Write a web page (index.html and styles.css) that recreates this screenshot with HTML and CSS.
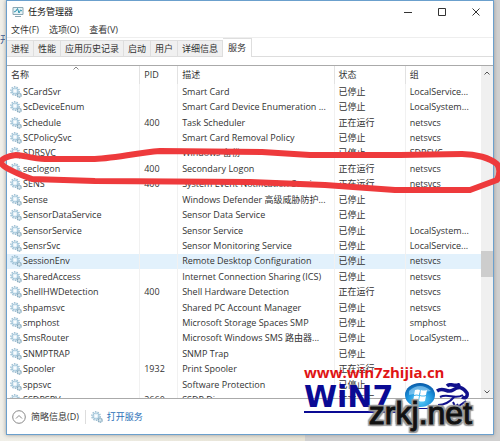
FILE: index.html
```html
<!DOCTYPE html>
<html>

<head>
    <meta charset="utf-8">
    <title>任务管理器</title>
    <link rel="stylesheet" href="styles.css">
</head>

<body>
    <svg class="defs" aria-hidden="true">
        <symbol id="gear" viewBox="0 0 12 12">
            <circle cx="5" cy="5" r="4.2" fill="none" stroke="#9dbfd3" stroke-width="1.4" stroke-dasharray="1.5 1.1" />
            <circle cx="5" cy="5" r="3" fill="#e3f0f7" stroke="#a3c6da" stroke-width="1.2" />
            <circle cx="5" cy="5" r="1.1" fill="#fff" />
            <circle cx="9.2" cy="9.2" r="2" fill="#d4e4ec" stroke="#86a9bd" stroke-width="1.3" stroke-dasharray="1.4 .5" />
        </symbol>
    </svg>
    <div class="behind">开</div>
    <div class="window">
        <div class="titlebar">
            <svg class="app-icon" viewBox="0 0 12 12">
                <path d="M1 1.500h10v7H1z" fill="#e5f3f7" stroke="#8ba6b3" />
                <path d="M2 6l2-1 1.500-2.500L7 7l1.500-3L10 5" fill="none" stroke="#2d93ae" />
                <path d="M3 10.500h6" stroke="#8ba6b3" />
            </svg>
            <span class="title">任务管理器</span>
            <button class="win-btn" aria-label="最小化"><svg viewBox="0 0 10 10"><path d="M1 5.500h8" /></svg></button>
            <button class="win-btn" aria-label="最大化"><svg viewBox="0 0 10 10"><path d="M1.500 1.500h7v7h-7z" /></svg></button>
            <button class="win-btn" aria-label="关闭"><svg viewBox="0 0 10 10"><path d="M1.500 1.500l7 7M8.500 1.500l-7 7" /></svg></button>
        </div>
        <div class="menu">
            <button>文件(F)</button>
            <button>选项(O)</button>
            <button>查看(V)</button>
        </div>
        <div class="tabs">
            <button>进程</button>
            <button>性能</button>
            <button>应用历史记录</button>
            <button>启动</button>
            <button>用户</button>
            <button>详细信息</button>
            <button class="active">服务</button>
        </div>
        <div class="list">
            <div class="pane">
                <table>
                    <colgroup>
                        <col class="c-name">
                        <col class="c-pid">
                        <col class="c-desc">
                        <col class="c-state">
                        <col class="c-group">
                    </colgroup>
                    <thead>
                        <tr><th>名称<svg class="sort" viewBox="0 0 6 4"><path d="M.5 3.500L3 1l2.500 2.500" /></svg></th><th>PID</th><th>描述</th><th>状态</th><th>组</th></tr>
                    </thead>
                    <tbody>
                        <tr><td><svg class="gear"><use href="#gear" /></svg>SCardSvr</td><td></td><td>Smart Card</td><td>已停止</td><td>LocalService...</td></tr>
                        <tr><td><svg class="gear"><use href="#gear" /></svg>ScDeviceEnum</td><td></td><td>Smart Card Device Enumeration ...</td><td>已停止</td><td>LocalSystem...</td></tr>
                        <tr><td><svg class="gear"><use href="#gear" /></svg>Schedule</td><td>400</td><td>Task Scheduler</td><td>正在运行</td><td>netsvcs</td></tr>
                        <tr><td><svg class="gear"><use href="#gear" /></svg>SCPolicySvc</td><td></td><td>Smart Card Removal Policy</td><td>已停止</td><td>netsvcs</td></tr>
                        <tr><td><svg class="gear"><use href="#gear" /></svg>SDRSVC</td><td></td><td>Windows 备份</td><td>已停止</td><td>SDRSVC</td></tr>
                        <tr><td><svg class="gear"><use href="#gear" /></svg>seclogon</td><td>400</td><td>Secondary Logon</td><td>正在运行</td><td>netsvcs</td></tr>
                        <tr><td><svg class="gear"><use href="#gear" /></svg>SENS</td><td>400</td><td>System Event Notification Servic...</td><td>正在运行</td><td>netsvcs</td></tr>
                        <tr><td><svg class="gear"><use href="#gear" /></svg>Sense</td><td></td><td>Windows Defender 高级威胁防护...</td><td>已停止</td><td></td></tr>
                        <tr><td><svg class="gear"><use href="#gear" /></svg>SensorDataService</td><td></td><td>Sensor Data Service</td><td>已停止</td><td></td></tr>
                        <tr><td><svg class="gear"><use href="#gear" /></svg>SensorService</td><td></td><td>Sensor Service</td><td>已停止</td><td>LocalSystem...</td></tr>
                        <tr><td><svg class="gear"><use href="#gear" /></svg>SensrSvc</td><td></td><td>Sensor Monitoring Service</td><td>已停止</td><td>LocalService...</td></tr>
                        <tr class="hover"><td><svg class="gear"><use href="#gear" /></svg>SessionEnv</td><td></td><td>Remote Desktop Configuration</td><td>已停止</td><td>netsvcs</td></tr>
                        <tr><td><svg class="gear"><use href="#gear" /></svg>SharedAccess</td><td></td><td>Internet Connection Sharing (ICS)</td><td>已停止</td><td>netsvcs</td></tr>
                        <tr><td><svg class="gear"><use href="#gear" /></svg>ShellHWDetection</td><td>400</td><td>Shell Hardware Detection</td><td>正在运行</td><td>netsvcs</td></tr>
                        <tr><td><svg class="gear"><use href="#gear" /></svg>shpamsvc</td><td></td><td>Shared PC Account Manager</td><td>已停止</td><td>netsvcs</td></tr>
                        <tr><td><svg class="gear"><use href="#gear" /></svg>smphost</td><td></td><td>Microsoft Storage Spaces SMP</td><td>已停止</td><td>smphost</td></tr>
                        <tr><td><svg class="gear"><use href="#gear" /></svg>SmsRouter</td><td></td><td>Microsoft Windows SMS 路由器...</td><td>已停止</td><td>LocalSystem...</td></tr>
                        <tr><td><svg class="gear"><use href="#gear" /></svg>SNMPTRAP</td><td></td><td>SNMP Trap</td><td>已停止</td><td></td></tr>
                        <tr><td><svg class="gear"><use href="#gear" /></svg>Spooler</td><td>1932</td><td>Print Spooler</td><td>正在运行</td><td></td></tr>
                        <tr><td><svg class="gear"><use href="#gear" /></svg>sppsvc</td><td></td><td>Software Protection</td><td>已停止</td><td></td></tr>
                        <tr><td><svg class="gear"><use href="#gear" /></svg>SSDPSRV</td><td>2660</td><td>SSDP Discovery</td><td>正在运行</td><td></td></tr>
                    </tbody>
                </table>
            </div>
            <div class="scrollbar">
                <svg viewBox="0 0 8 6"><path d="M1.500 4.500L4 2l2.500 2.500" /></svg>
                <div class="thumb"></div>
                <svg viewBox="0 0 8 6"><path d="M1.500 1.500L4 4l2.500-2.500" /></svg>
            </div>
        </div>
        <div class="footer">
            <button class="fewer">
                <svg viewBox="0 0 14 14"><circle cx="7" cy="7" r="6.300" /><path d="M4 8.500l3-3 3 3" /></svg>
                简略信息(D)
            </button>
            <a class="open" href="#"><svg class="gear"><use href="#gear" /></svg>打开服务</a>
        </div>
    </div>

    <!-- hand-drawn ring round seclogon -->
    <svg class="ring" viewBox="0 0 500 50">
        <path d="M16 7C8 8 0 11 1 15C4 20 18 26 32 31L95 33L250 34L325 37L395 42L470 42L497 32C500 26 500 20 497 16C490 10 476 6 462 6L400 7L310 7L262 4L160 3C135 5 110 11 92 11L45 11C32 11 24 7 16 7z" />
    </svg>

    <div class="marks">
        <div class="site">www.win7zhijia.cn</div>
        <div class="logo">
            <span class="win">WiN7</span>
            <svg class="orb" viewBox="0 0 32 28">
                <defs>
                    <radialGradient id="sky" cx=".5" cy=".7" r=".7">
                        <stop offset="0" stop-color="#64d5ff" />
                        <stop offset=".6" stop-color="#1c93dc" />
                        <stop offset="1" stop-color="#0757a6" />
                    </radialGradient>
                </defs>
                <ellipse cx="16" cy="12" rx="15" ry="12" fill="url(#sky)" />
                <path d="M5 8Q16-2 27 8Q17 9 5 12z" fill="#c4e9ff" opacity=".5" />
                <path d="M11 7q3-1 5 0l-1 5q-2-1-5 0zM17 7q3 1 6 0l-1 5q-3 1-6 0zM10 13q3-1 5 0l-1 5q-3-1-5 0zM16 13q3 1 6 0l-1 5q-3 1-6 0z" fill="#fff" />
                <path d="M1 25.500h31" stroke="#10108c" />
            </svg>
            <svg class="home" viewBox="0 0 34 42">
                <path d="M11 3C15-1 18 5 24 1" stroke-width="3.500" />
                <path d="M1 8C8 3 11 11 17 7S27 4 31 10C32 14 29 16 26 14" stroke-width="3.500" />
                <path d="M4 14C12 10 19 17 27 12M18 14C13 20 8 22 2 22M17 19C21 26 20 34 12 34M16 24L6 31M21 21C24 28 26 32 33 36M30 18L23 23" />
            </svg>
        </div>
        <div class="domain">zrkj.net</div>
    </div>
</body>

</html>
```

FILE: styles.css
```css
* {
    box-sizing: border-box;
}

body {
    margin: 0;
    height: 100vh;
    padding: 0 6px 6px;
    overflow: hidden;
    position: relative;
    background: linear-gradient(90deg, #f0efe8 0, #e6e2d4 61%, #d0d0d0 61%);
    font-family: "Open Sans", "Noto Sans CJK SC", sans-serif;
    font-size: 9px;
    line-height: 12px;
    color: #333;
}

button {
    font: inherit;
    color: inherit;
    background: none;
    border: 0;
    padding: 0;
}

svg {
    flex: none;
}

.defs {
    position: absolute;
    width: 0;
    height: 0;
}

.behind {
    position: absolute;
    left: 0;
    top: 34px;
    width: 5px;
    overflow: hidden;
    color: #35578f;
}

.window {
    height: 100%;
    display: flex;
    flex-direction: column;
    background: #fff;
    border: 1px solid #6ba0cd;
    box-shadow: 0 0 4px #999;
}

.titlebar {
    display: flex;
    align-items: center;
    height: 22px;
    padding-left: 5px;
}

.app-icon {
    width: 12px;
    height: 12px;
}

.title {
    flex: 1;
    padding-left: 4px;
    color: #111;
}

.win-btn {
    display: flex;
    justify-content: center;
    width: 34px;
}

.win-btn svg {
    width: 10px;
    height: 10px;
    fill: none;
    stroke: #333;
}

.menu {
    display: flex;
    gap: 10px;
    height: 14px;
    padding-left: 4px;
}

.tabs {
    display: flex;
    align-items: flex-end;
    height: 20px;
    border-top: 1px solid #eee;
    border-bottom: 1px solid #ddd;
}

.tabs button {
    height: 16px;
    padding: 0 4px;
    background: #f0f0f0;
    border: 1px solid #dedede;
    border-width: 1px 1px 0 0;
}

.tabs .active {
    height: 19px;
    padding: 0 5px;
    margin-bottom: -1px;
    background: #fff;
}

.list {
    display: flex;
    flex: 1;
    min-height: 0;
    margin-top: 8px;
    border-top: 1px solid #aaa;
    border-bottom: 1px solid #aaa;
}

.pane {
    flex: 1;
    min-width: 0;
    overflow: hidden;
}

table {
    width: 100%;
    height: 342px;
    table-layout: fixed;
    border-collapse: collapse;
}

.c-name {
    width: 28%;
}

.c-pid {
    width: 8%;
}

.c-desc {
    width: 33%;
}

.c-state {
    width: 15%;
}

.c-group {
    width: 16%;
}

th,
td {
    padding: 0 0 0 4px;
    text-align: left;
    font-weight: normal;
    line-height: 12px;
    white-space: nowrap;
    border-right: 1px solid #f1f1f1;
}

th {
    height: 18px;
    position: relative;
    border-right-color: #e2e2e2;
}

th:last-child,
td:last-child {
    border-right: 0;
}

td:first-child {
    padding-left: 3px;
}

.sort {
    position: absolute;
    left: 50%;
    top: 0;
    width: 6px;
    height: 4px;
    fill: none;
    stroke: #888;
}

.gear {
    width: 12px;
    height: 12px;
    margin-right: 1px;
    vertical-align: top;
}

.hover {
    background: #e2f1fc;
}

.scrollbar {
    display: flex;
    flex-direction: column;
    align-items: center;
    width: 12px;
    padding: 4px 0 3px;
    background: #f0f0f0;
}

.scrollbar svg {
    width: 8px;
    height: 6px;
    fill: none;
    stroke: #555;
}

/* 0.61 of the free track lies above the thumb */
.scrollbar::before,
.scrollbar::after {
    content: "";
    flex: 61;
    order: 1;
}

.scrollbar::after {
    flex: 39;
    order: 3;
}

.thumb {
    width: 100%;
    height: 26px;
    order: 2;
    background: #cdcdcd;
}

.thumb + svg {
    order: 4;
}

.footer {
    display: flex;
    align-items: center;
    height: 35px;
    padding-left: 5px;
}

.fewer,
.open {
    display: flex;
    align-items: center;
}

.fewer {
    gap: 5px;
    padding-right: 6px;
    border-right: 1px solid #ddd;
}

.fewer svg {
    width: 14px;
    height: 14px;
    fill: none;
    stroke: #888;
}

.open {
    gap: 3px;
    padding-left: 5px;
    color: #2a70b8;
    text-decoration: none;
}

.ring {
    position: absolute;
    left: 0;
    top: 148px;
    width: 100%;
    height: 50px;
    fill: none;
    stroke: #ee3a3c;
    stroke-width: 6px;
    stroke-linejoin: round;
    pointer-events: none;
}

.marks {
    position: absolute;
    right: 22px;
    bottom: 8px;
    width: 174px;
    height: 72px;
    pointer-events: none;
}

.site {
    font: bold 15px/22px "Open Sans", sans-serif;
    color: #e01414;
}

.logo {
    display: flex;
    align-items: flex-start;
}

.win {
    width: 100px;
    height: 30px;
    font: bold 30px/27px "DejaVu Sans", sans-serif;
    color: #0a0a94;
    border-bottom: 2px solid #0a0a94;
}

.orb {
    width: 32px;
    height: 28px;
}

.home {
    width: 34px;
    height: 42px;
    fill: none;
    stroke: #10108c;
    stroke-width: 2px;
}

.domain {
    position: absolute;
    right: 6px;
    bottom: 2px;
    font: 32px/36px "Liberation Sans Narrow", "Liberation Sans", sans-serif;
    color: #111;
    -webkit-text-stroke: 1px #111;
    text-shadow: 2px 0 1px #999, -2px 0 1px #999, 0 2px 1px #999, 0 -2px 1px #999, 2px 2px 1px #999, -2px -2px 1px #999, 2px -2px 1px #999, -2px 2px 1px #999;
}
```
